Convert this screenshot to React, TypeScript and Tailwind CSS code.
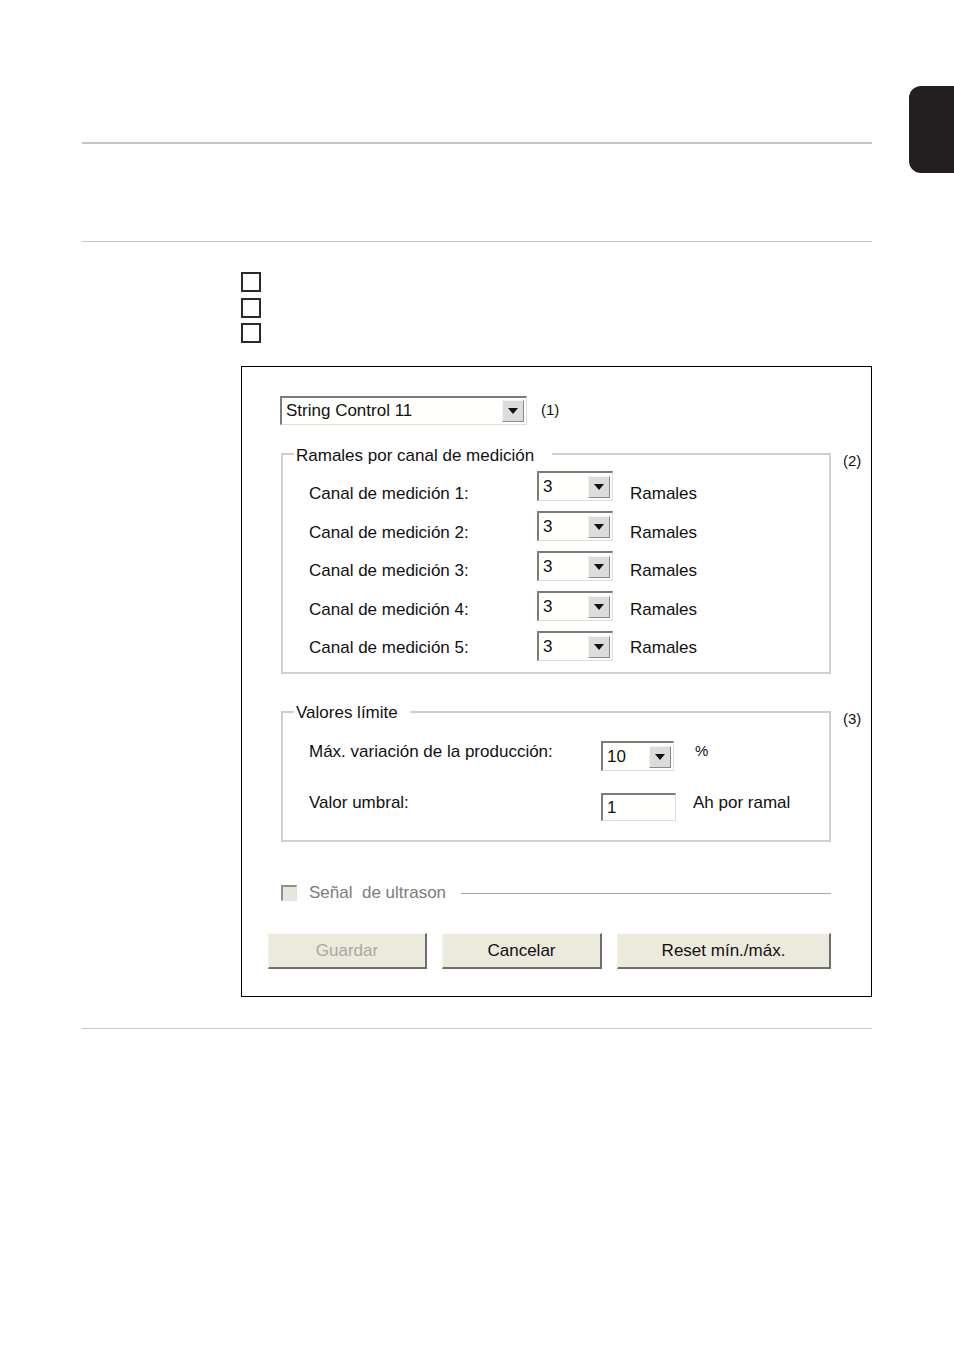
import React from "react";

function Arrow() {
  return (
    <div className="flex h-[22px] w-[22px] shrink-0 items-center justify-center border border-t-[#f4f4f4] border-l-[#f4f4f4] border-b-[#8a8a8a] border-r-[#8a8a8a] bg-[#dcdcdc]">
      <svg width="10" height="6" viewBox="0 0 10 6">
        <path d="M0 0 H10 L5 6 Z" fill="#111" />
      </svg>
    </div>
  );
}

function Combo({ value, className }: { value: string; className: string }) {
  return (
    <div
      className={
        "flex items-center justify-between border-t-2 border-l-2 border-b border-r border-t-[#7c7c7c] border-l-[#7c7c7c] border-b-[#dedede] border-r-[#dedede] bg-[#fffffb] pr-[2px] " +
        className
      }
    >
      <span className="pl-[4px] leading-[20px]">{value}</span>
      <Arrow />
    </div>
  );
}

function Btn({ label, className, disabled }: { label: string; className: string; disabled?: boolean }) {
  return (
    <div
      className={
        "flex h-[36px] items-center justify-center border-t border-l border-t-[#fbfbf8] border-l-[#f4f2ea] border-b-2 border-r-2 border-b-[#6f6f6a] border-r-[#6f6f6a] bg-[#ece9dd] " +
        (disabled ? "text-[#a9a89f] " : "text-[#111] ") +
        className
      }
    >
      {label}
    </div>
  );
}

const labels = [
  "Canal de medición 1:",
  "Canal de medición 2:",
  "Canal de medición 3:",
  "Canal de medición 4:",
  "Canal de medición 5:",
];

export default function App() {
  return (
    <div className="relative h-[1350px] w-[954px] bg-white font-['Liberation_Sans',Arial,sans-serif] text-[#111]">
      <div className="absolute left-[909px] top-[86px] h-[87px] w-[45px] rounded-l-[12px] bg-[#231f20]" />

      <div className="w-[872px] pl-[82px] pt-[142px]">
        <div className="h-[2px] bg-[#c6c6c6]" />
        <div className="mt-[97px] h-px bg-[#c6c6c6]" />

        <div className="ml-[159px] mt-[30px] flex flex-col gap-[5.5px]">
          <div className="h-[20px] w-[20px] border-2 border-[#2a2a2a]" />
          <div className="h-[20px] w-[20px] border-2 border-[#2a2a2a]" />
          <div className="h-[20px] w-[20px] border-2 border-[#2a2a2a]" />
        </div>

        <div className="ml-[159px] mt-[23px] h-[631px] w-[631px] border border-black text-[17px]">
          <div className="ml-[38px] mt-[29px] flex items-center">
            <Combo value="String Control 11" className="h-[29px] w-[247px]" />
            <span className="ml-[14px] text-[15px]">(1)</span>
          </div>

          <div className="ml-[39px] mt-[28px] flex items-start">
            <div className="relative h-[221px] w-[550px] border-2 border-[#cfcfcf]">
              <span className="absolute left-[11px] top-[-9px] bg-white pl-[2px] pr-[18px] leading-[20px]">
                Ramales por canal de medición
              </span>
              <div className="flex">
                <div className="w-[254px] pl-[26px] pt-[29px]">
                  {labels.map((l) => (
                    <div key={l} className="h-[38.5px] leading-[20px]">
                      {l}
                    </div>
                  ))}
                </div>
                <div className="flex flex-col gap-[10px] pt-[16px]">
                  {labels.map((l) => (
                    <Combo key={l} value="3" className="h-[30px] w-[76px]" />
                  ))}
                </div>
                <div className="ml-[17px] pt-[29px]">
                  {labels.map((l) => (
                    <div key={l} className="h-[38.5px] leading-[20px]">
                      Ramales
                    </div>
                  ))}
                </div>
              </div>
            </div>
            <span className="ml-[12px] text-[15px] leading-[16px]">(2)</span>
          </div>

          <div className="ml-[39px] mt-[37px] flex items-start">
            <div className="relative h-[131px] w-[550px] border-2 border-[#cfcfcf]">
              <span className="absolute left-[11px] top-[-10px] bg-white pl-[2px] pr-[12px] leading-[20px]">
                Valores límite
              </span>
              <div className="mt-[28px] flex items-start">
                <div className="w-[318px] pl-[26px] pt-[1px] leading-[20px]">Máx. variación de la producción:</div>
                <Combo value="10" className="h-[30px] w-[73px]" />
                <span className="ml-[21px] text-[15px] leading-[20px]">%</span>
              </div>
              <div className="mt-[22px] flex items-start">
                <div className="w-[318px] pl-[26px] leading-[20px]">Valor umbral:</div>
                <div className="flex h-[28px] w-[75px] items-center border-t-2 border-l-2 border-b border-r border-t-[#7c7c7c] border-l-[#7c7c7c] border-b-[#dedede] border-r-[#dedede] bg-[#fffffb] pl-[4px]">
                  1
                </div>
                <span className="ml-[17px] leading-[20px]">Ah por ramal</span>
              </div>
            </div>
            <span className="ml-[12px] mt-[0px] text-[15px] leading-[16px]">(3)</span>
          </div>

          <div className="ml-[39px] mt-[43px] flex h-[16px] w-[550px] items-center">
            <div className="h-[16px] w-[16px] border-t-2 border-l-2 border-b border-r border-t-[#8f8f8f] border-l-[#8f8f8f] border-b-[#e0e0e0] border-r-[#e0e0e0] bg-[#e8e6dc]" />
            <span className="ml-[12px] text-[#7c7c7c]">Señal&nbsp; de ultrason</span>
            <div className="ml-[15px] h-px flex-1 bg-[#a8a8a8]" />
          </div>

          <div className="ml-[26px] mt-[32px] flex gap-[15px]">
            <Btn label="Guardar" className="w-[159px]" disabled />
            <Btn label="Cancelar" className="w-[160px]" />
            <Btn label="Reset mín./máx." className="w-[214px]" />
          </div>
        </div>

        <div className="mt-[31px] h-px bg-[#c6c6c6]" />
      </div>
    </div>
  );
}
